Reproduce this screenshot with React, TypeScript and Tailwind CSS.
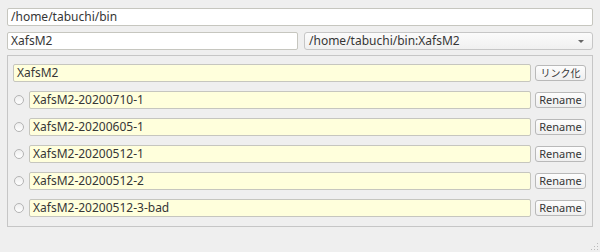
import React from "react";

const names = [
  "XafsM2-20200710-1",
  "XafsM2-20200605-1",
  "XafsM2-20200512-1",
  "XafsM2-20200512-2",
  "XafsM2-20200512-3-bad",
];

function Field({ value, yellow }: { value: string; yellow?: boolean }) {
  return (
    <div
      className={`flex-1 h-[18px] flex items-center px-[3px] border border-[#c6c6bf] rounded-[2px] text-[12px] text-[#363636] ${
        yellow ? "bg-[#ffffdc]" : "bg-white"
      }`}
    >
      {value}
    </div>
  );
}

function Btn({ label, small }: { label: string; small?: boolean }) {
  return (
    <div
      className={`w-[51px] h-[16px] flex items-center justify-center border border-[#b9b9b9] rounded-[3px] bg-gradient-to-b from-[#fdfdfd] to-[#efefef] text-[#363636] ${
        small ? "text-[10px]" : "text-[11px]"
      }`}
    >
      {label}
    </div>
  );
}

export default function App() {
  return (
    <div
      className="w-[600px] h-[252px] bg-[#efefef] relative overflow-hidden"
      style={{ fontFamily: "'Noto Sans', 'Noto Sans CJK JP', sans-serif" }}
    >
      <div className="pt-[8px] px-[7px] flex flex-col">
        <div className="flex">
          <Field value="/home/tabuchi/bin" />
        </div>
        <div className="flex gap-[6px] mt-[6px] h-[18px]">
          <div className="w-[291px] flex">
            <Field value="XafsM2" />
          </div>
          <div className="flex-1 h-[18px] flex items-center justify-between pl-[4px] pr-[8px] border border-[#c6c6c6] rounded-[3px] bg-gradient-to-b from-[#fbfbfb] to-[#f0f0f0] text-[12px] text-[#363636]">
            <span>/home/tabuchi/bin:XafsM2</span>
            <span className="w-0 h-0 border-l-[3px] border-r-[3px] border-t-[3px] border-l-transparent border-r-transparent border-t-[#666]" />
          </div>
        </div>
        <div className="mt-[5px] h-[172px] border border-[#c6c6c6] pt-[8px] pl-[5px] pr-[6px] flex flex-col gap-[9px]">
          <div className="flex items-center">
            <div className="w-[518px] flex">
              <Field value="XafsM2" yellow />
            </div>
            <div className="ml-[4px]">
              <Btn label="リンク化" small />
            </div>
          </div>
          {names.map((n) => (
            <div key={n} className="flex items-center">
              <div className="w-[16px] flex justify-start pl-[1px]">
                <div className="w-[10px] h-[10px] rounded-full border border-[#b4b4b4] bg-gradient-to-b from-[#eeeeee] to-white" />
              </div>
              <div className="w-[502px] flex">
                <Field value={n} yellow />
              </div>
              <div className="ml-[4px]">
                <Btn label="Rename" />
              </div>
            </div>
          ))}
        </div>
      </div>
      <div className="absolute right-[2px] bottom-[2px] grid grid-cols-3 gap-[2px]">
        {[0, 1, 2, 3, 4, 5, 6, 7, 8].map((i) => (
          <div
            key={i}
            className={`w-[1px] h-[1px] ${i === 0 || i === 1 || i === 3 ? "bg-transparent" : "bg-[#bbb]"}`}
          />
        ))}
      </div>
    </div>
  );
}
